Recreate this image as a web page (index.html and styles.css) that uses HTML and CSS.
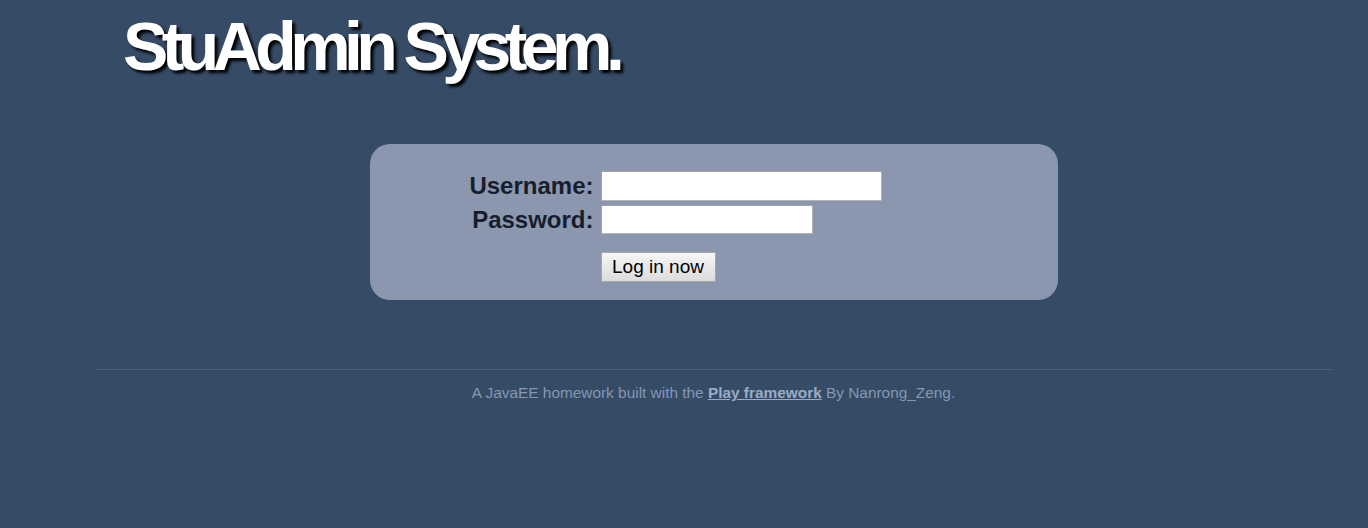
FILE: index.html
```html
<!DOCTYPE html>
<html>
<head>
<meta charset="utf-8">
<title>StuAdmin System.</title>
<link rel="stylesheet" href="styles.css">
</head>
<body>
<div class="page">
  <header class="header">
    <h1 class="title">StuAdmin System.</h1>
  </header>
  <main class="main">
    <form class="login-box">
      <div class="login-grid">
        <label class="field-label" for="username">Username:</label>
        <input class="field-input field-user" id="username" type="text">
        <label class="field-label" for="password">Password:</label>
        <input class="field-input field-pass" id="password" type="password">
        <span class="spacer"></span>
        <button class="login-btn" type="button">Log in now</button>
      </div>
    </form>
  </main>
  <footer class="footer">
    A JavaEE homework built with the <a class="footer-link" href="#">Play framework</a> By Nanrong_Zeng.
  </footer>
</div>
</body>
</html>
```

FILE: styles.css
```css
html, body {
  margin: 0;
  padding: 0;
  background: #364b66;
  font-family: "Liberation Sans", Arial, sans-serif;
}

.page {
  margin: 0 36px 0 95px;
  min-height: 528px;
}

.header {
  padding: 12px 0 0 28px;
}

.title {
  margin: 0;
  font-size: 68px;
  line-height: 68px;
  font-weight: bold;
  letter-spacing: -6.6px;
  color: #ffffff;
  text-shadow: 3px 3px 3px #000000;
}

.main {
  display: flex;
  justify-content: center;
  padding-top: 64px;
}

.login-box {
  width: 688px;
  height: 156px;
  box-sizing: border-box;
  background: #8a97ae;
  border-radius: 20px;
  padding: 27px 0 0 0;
}

.login-grid {
  display: grid;
  grid-template-columns: 231px auto;
  row-gap: 4px;
  align-items: center;
  justify-items: start;
}

.field-label {
  justify-self: end;
  padding-right: 7px;
  font-size: 24px;
  font-weight: bold;
  color: #161e2e;
  line-height: 28px;
}

.field-input {
  box-sizing: border-box;
  height: 30px;
  border: 1px solid #a0a0a0;
  border-right-color: #b4b4b4;
  border-bottom-color: #b4b4b4;
  background: #ffffff;
  margin: 0;
  padding: 2px 4px;
  font-size: 18px;
  font-family: "Liberation Sans", Arial, sans-serif;
}

.field-user {
  width: 281px;
}

.field-pass {
  width: 212px;
  height: 29px;
}

.spacer {
  display: block;
}

.login-btn {
  margin-top: 14px;
  box-sizing: border-box;
  width: 115px;
  height: 30px;
  padding: 0;
  border: 1px solid #a6a6a6;
  background: linear-gradient(#f6f6f6, #dcdcdc);
  font-family: "Liberation Sans", Arial, sans-serif;
  font-size: 19px;
  color: #000000;
}

.footer {
  margin-top: 69px;
  border-top: 1px solid #4b607c;
  padding-top: 14px;
  text-align: center;
  font-size: 15.4px;
  color: #8597b3;
}

.footer-link {
  color: #9babc5;
  font-weight: bold;
  text-decoration: underline;
}
```
